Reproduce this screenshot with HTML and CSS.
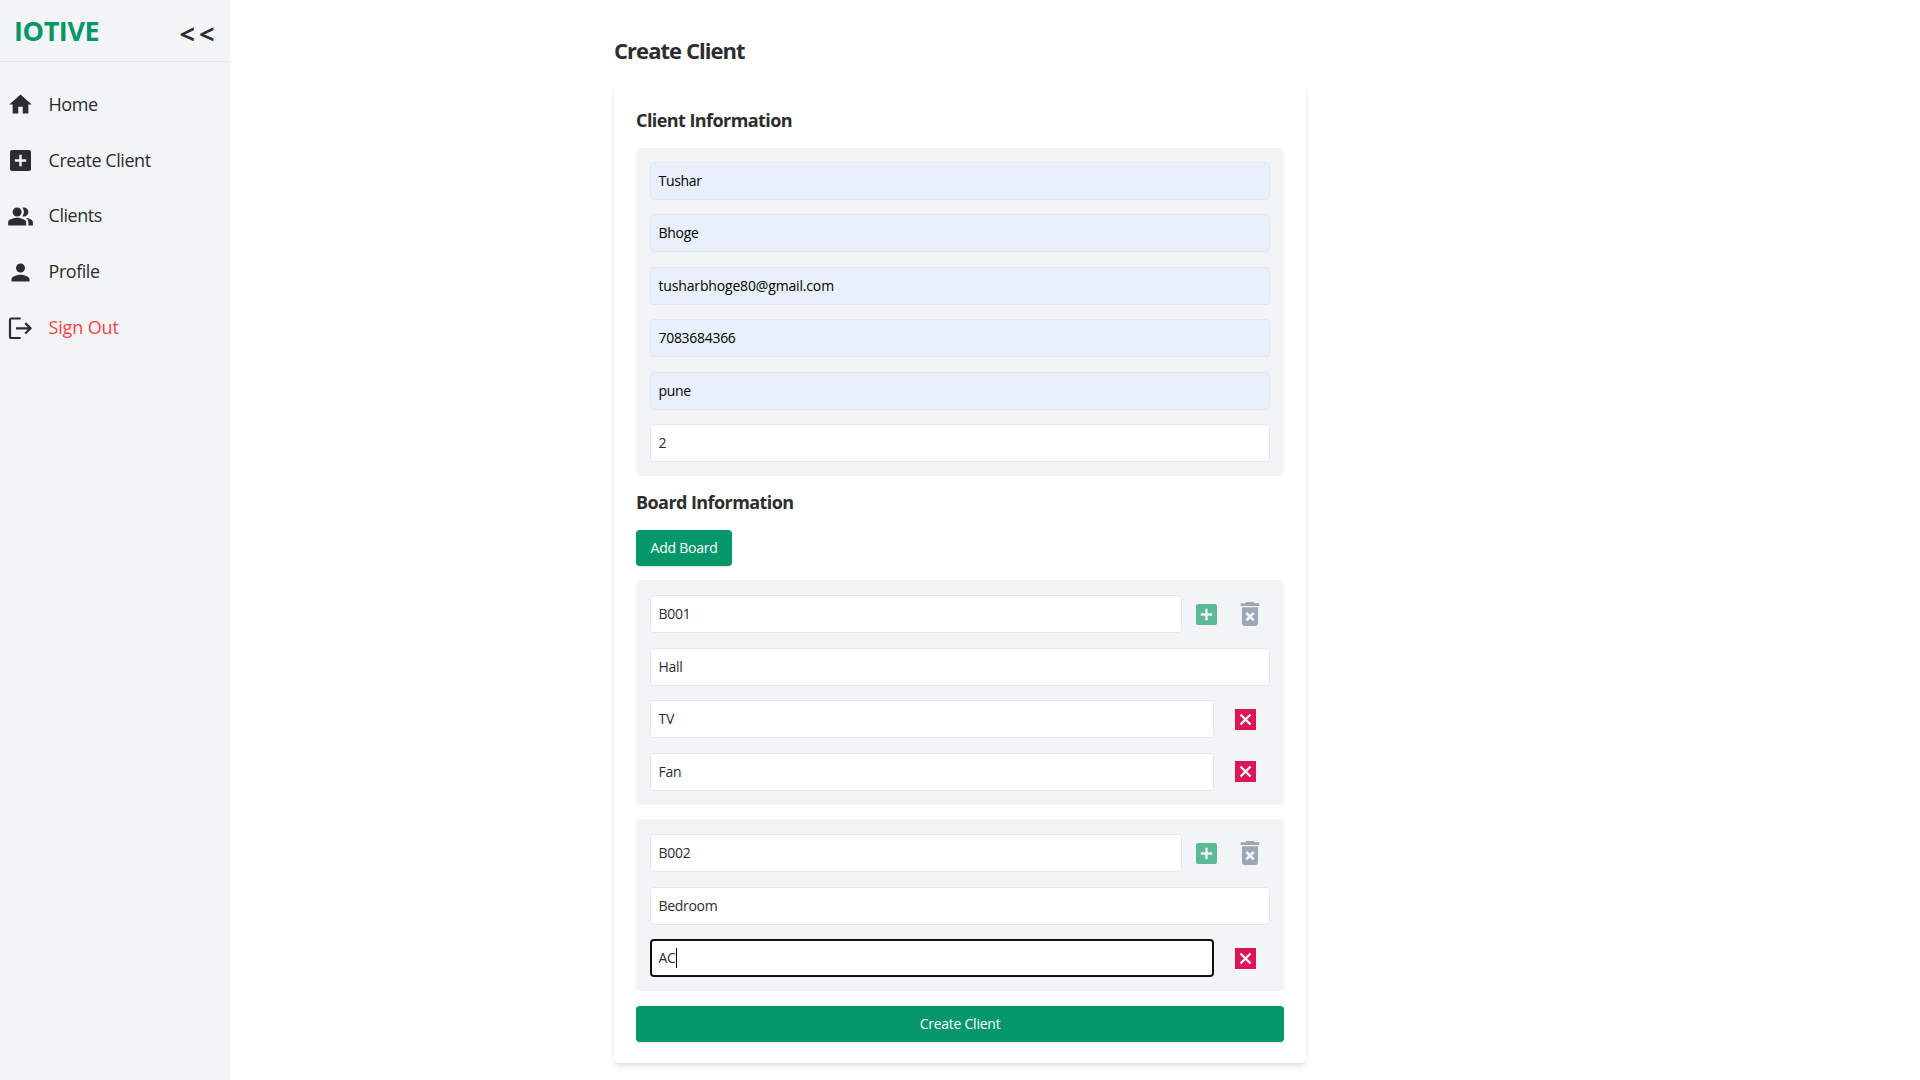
FILE: index.html
```html
<!DOCTYPE html>
<html lang="en">
<head>
<meta charset="utf-8">
<title>Create Client</title>
<link rel="stylesheet" href="styles.css">
</head>
<body>
<svg class="defs" width="0" height="0">
  <symbol id="plus" viewBox="0 0 27 27"><path fill-rule="evenodd" d="M5 3h17q2 0 2 2v17q0 2-2 2H5q-2 0-2-2V5q0-2 2-2zM12.300 7.800v4.500H7.800v2.400h4.500v4.500h2.400v-4.500h4.500v-2.400h-4.500V7.800z"/></symbol>
  <symbol id="close" viewBox="0 0 27 27"><path d="M3 3h21v21H3z"/><path d="M8.500 8.500l10 10m0-10l-10 10" stroke="#f3f4f6" stroke-width="2.400"/></symbol>
  <symbol id="trash" viewBox="0 0 24 24"><path d="M6 19c0 1.100.9 2 2 2h8c1.100 0 2-.9 2-2V7H6v12zm2.460-7.120l1.410-1.410L12 12.590l2.120-2.120 1.410 1.410L13.410 14l2.120 2.120-1.410 1.410L12 15.410l-2.120 2.120-1.410-1.410L10.590 14l-2.130-2.120zM15.500 4l-1-1h-5l-1 1H5v2h14V4z"/></symbol>
</svg>
<div class="app">
  <aside class="sidebar">
    <div class="brand"><span class="logo">IOTIVE</span><span class="collapse">&lt;&lt;</span></div>
    <nav class="menu">
      <a class="item"><svg class="icon" viewBox="0 0 24 24"><path d="M10 20v-6h4v6h5v-8h3L12 3 2 12h3v8z"/></svg><span>Home</span></a>
      <a class="item"><svg class="icon"><use href="#plus"/></svg><span>Create Client</span></a>
      <a class="item"><svg class="icon" viewBox="0 0 24 24"><path d="M16.670 13.130C18.040 14.060 19 15.320 19 17v3h4v-3c0-2.180-3.570-3.470-6.330-3.870z"/><circle cx="9" cy="8" r="4"/><path d="M15 12c2.210 0 4-1.790 4-4s-1.790-4-4-4c-.47 0-.91.1-1.330.24C14.500 5.270 15 6.580 15 8s-.5 2.730-1.330 3.760c.42.14.86.24 1.330.24zM9 13c-2.670 0-8 1.340-8 4v3h16v-3c0-2.660-5.330-4-8-4z"/></svg><span>Clients</span></a>
      <a class="item"><svg class="icon" viewBox="0 0 24 24"><path d="M12 12c2.210 0 4-1.790 4-4s-1.790-4-4-4-4 1.790-4 4 1.790 4 4 4zm0 2c-2.670 0-8 1.340-8 4v2h16v-2c0-2.660-5.330-4-8-4z"/></svg><span>Profile</span></a>
      <a class="item signout"><svg class="icon line" viewBox="0 0 27 27"><path d="M13.700 3.500H4.500Q3 3.500 3 5v16.500Q3 23 4.500 23h9.200M9 13.300h14.500M18.300 8.100l5.200 5.200-5.200 5.200"/></svg><span>Sign Out</span></a>
    </nav>
  </aside>
  <main class="main">
    <h1 class="title">Create Client</h1>
    <section class="card">
      <h2 class="heading">Client Information</h2>
      <div class="panel">
        <div class="field filled">Tushar</div>
        <div class="field filled">Bhoge</div>
        <div class="field filled email">tusharbhoge80@gmail.com</div>
        <div class="field filled">7083684366</div>
        <div class="field filled">pune</div>
        <div class="field">2</div>
      </div>
      <h2 class="heading boards">Board Information</h2>
      <button class="button add">Add Board</button>
      <div class="panel board">
        <div class="row"><div class="field">B001</div><svg class="icon plus"><use href="#plus"/></svg><svg class="icon trash"><use href="#trash"/></svg></div>
        <div class="field">Hall</div>
        <div class="row device"><div class="field">TV</div><svg class="icon close"><use href="#close"/></svg></div>
        <div class="row device"><div class="field">Fan</div><svg class="icon close"><use href="#close"/></svg></div>
      </div>
      <div class="panel board">
        <div class="row"><div class="field">B002</div><svg class="icon plus"><use href="#plus"/></svg><svg class="icon trash"><use href="#trash"/></svg></div>
        <div class="field">Bedroom</div>
        <div class="row device"><div class="field focused">AC<i class="caret"></i></div><svg class="icon close"><use href="#close"/></svg></div>
      </div>
      <button class="button submit">Create Client</button>
    </section>
  </main>
</div>
</body>
</html>
```
FILE: styles.css
```css
* { box-sizing: border-box; }
body { margin: 0; background: #fff; color: #2d2d2f; font-family: "Segoe UI", "Open Sans", sans-serif; overflow: hidden; }
.defs { display: block; height: 0; }
.app { display: flex; height: 1080px; }
.sidebar { width: 230px; background: #f3f4f6; flex: none; }
.brand { display: flex; justify-content: space-between; align-items: center; height: 62px; padding: 0 11.5px 0 14px; border-bottom: 1px solid #e3e5e8; }
.logo { color: #059669; font-size: 27px; font-weight: 700; letter-spacing: -0.4px; }
.collapse { padding-top: 5px; font-size: 27px; font-weight: 700; letter-spacing: 4px; }
.menu { display: flex; flex-direction: column; padding-top: 15px; }
.item { display: flex; align-items: center; gap: 14.5px; height: 55.8px; padding-left: 7px; font-size: 18px; letter-spacing: -0.45px; }
.item span { padding-bottom: 2px; }
.icon { display: block; width: 27px; height: 27px; fill: currentColor; flex: none; }
.icon.line { fill: none; stroke: #2d2d2f; stroke-width: 2.2; }
.signout { color: #ef4444; letter-spacing: -0.15px; }
.main { flex: 1; display: flex; flex-direction: column; padding: 33px 0 0 384px; }
.title { margin: 0 0 17px; height: 34px; line-height: 34px; font-size: 22px; font-weight: 700; letter-spacing: -0.95px; }
.card { width: 692px; height: 979px; padding: 22px; border-radius: 4px; box-shadow: 0 4px 6px -1px rgba(0,0,0,.1), 0 2px 4px -2px rgba(0,0,0,.1); }
.heading { margin: 0; height: 28px; line-height: 28px; font-size: 18px; font-weight: 700; letter-spacing: -0.57px; }
.panel { display: flex; flex-direction: column; gap: 14.4px; margin-top: 14px; height: 328px; padding: 14px; background: #f3f4f6; border-radius: 4px; }
.field { flex: none; display: flex; align-items: center; height: 38px; padding: 0 8px 1px 7.5px; background: #fff; border: 1px solid #e5e7eb; border-radius: 4px; font-size: 14px; letter-spacing: -0.3px; }
.filled { background: #e8f0fe; color: #000; }
.email { letter-spacing: -0.16px; }
.boards { margin-top: 12px; margin-bottom: 14px; }
.button { display: block; height: 36px; padding: 0 0 1px; border: 0; border-radius: 4px; background: #059669; color: #fff; font: 14px "Segoe UI", "Open Sans", sans-serif; letter-spacing: -0.25px; box-shadow: 0 1px 2px rgba(0,0,0,.12); }
.add { width: 96px; }
.board { gap: 14.6px; height: 225px; padding-top: 15px; }
.board + .board { height: 172px; }
.row { display: flex; align-items: center; }
.row .field { width: 532px; }
.device .field { width: 564px; }
.plus { color: #5cb995; margin-left: 11px; }
.trash { width: 32px; height: 32px; margin-left: 14px; margin-right: -8px; color: #9ca7b5; }
.close { margin-left: 18px; color: #dc1656; }
.row .focused { border: 2px solid #101010; padding: 0 7px 1px 6.5px; }
.caret { width: 1px; height: 20px; background: #000; }
.submit { width: 648px; margin-top: 15px; }
```
